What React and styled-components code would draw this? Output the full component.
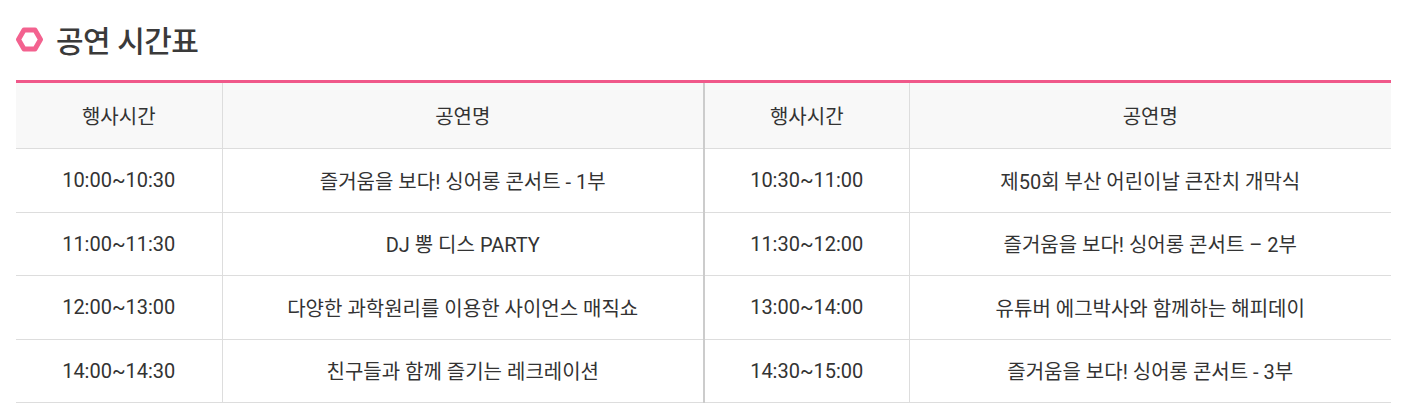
import React from 'react';
import styled, { createGlobalStyle } from 'styled-components';

const GlobalStyle = createGlobalStyle`
  body {
    margin: 0;
    background: #fff;
    font-family: Roboto, "Noto Sans CJK KR", sans-serif;
    color: #333;
  }
`;

const Page = styled.div`
  padding: 20px 14px 0 16px;
`;

const Title = styled.h2`
  display: flex;
  align-items: center;
  gap: 13px;
  margin: 0 0 22px;
  height: 38px;
  font-size: 30px;
  font-weight: 500;
  color: #3a3a3a;
  letter-spacing: -0.5px;
`;

const Table = styled.table`
  width: 1375px;
  border-collapse: collapse;
  table-layout: fixed;
  border-top: 3px solid #f0588a;
`;

const Th = styled.th`
  height: 65px;
  padding: 0;
  background: #f8f8f8;
  font-size: 20px;
  font-weight: 400;
  color: #333;
  border-bottom: 1px solid #ddd;
  border-left: ${(p) => (p.$split ? '2px solid #ccc' : p.$first ? 'none' : '1px solid #ddd')};
`;

const Td = styled.td`
  height: 62.5px;
  padding: 0;
  text-align: center;
  font-size: 20px;
  color: #333;
  border-bottom: 1px solid #ddd;
  border-left: ${(p) => (p.$split ? '2px solid #ccc' : p.$first ? 'none' : '1px solid #ddd')};
`;

const rows = [
  ['10:00~10:30', '즐거움을 보다! 싱어롱 콘서트 - 1부', '10:30~11:00', '제50회 부산 어린이날 큰잔치 개막식'],
  ['11:00~11:30', 'DJ 뽕 디스 PARTY', '11:30~12:00', '즐거움을 보다! 싱어롱 콘서트 – 2부'],
  ['12:00~13:00', '다양한 과학원리를 이용한 사이언스 매직쇼', '13:00~14:00', '유튜버 에그박사와 함께하는 해피데이'],
  ['14:00~14:30', '친구들과 함께 즐기는 레크레이션', '14:30~15:00', '즐거움을 보다! 싱어롱 콘서트 - 3부'],
];

function Hexagon() {
  return (
    <svg width="27" height="25" viewBox="0 0 27 25">
      <polygon
        points="8,3 19,3 24.5,12.5 19,22 8,22 2.5,12.5"
        fill="none"
        stroke="#f3628f"
        strokeWidth="5"
        strokeLinejoin="round"
      />
    </svg>
  );
}

export default function App() {
  return (
    <Page>
      <GlobalStyle />
      <Title>
        <Hexagon />
        공연 시간표
      </Title>
      <Table>
        <colgroup>
          <col style={{ width: 206 }} />
          <col style={{ width: 482 }} />
          <col style={{ width: 205 }} />
          <col style={{ width: 482 }} />
        </colgroup>
        <thead>
          <tr>
            <Th $first>행사시간</Th>
            <Th>공연명</Th>
            <Th $split>행사시간</Th>
            <Th>공연명</Th>
          </tr>
        </thead>
        <tbody>
          {rows.map((r) => (
            <tr key={r[0]}>
              <Td $first>{r[0]}</Td>
              <Td>{r[1]}</Td>
              <Td $split>{r[2]}</Td>
              <Td>{r[3]}</Td>
            </tr>
          ))}
        </tbody>
      </Table>
    </Page>
  );
}
